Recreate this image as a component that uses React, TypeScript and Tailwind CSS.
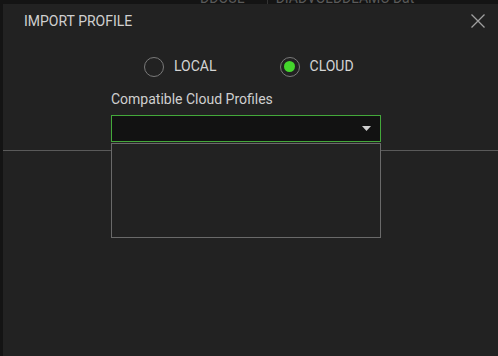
const Radio = ({ label, checked }: { label: string; checked?: boolean }) => (
  <div className="flex items-center gap-[10px]">
    <span className="flex h-[20px] w-[20px] items-center justify-center rounded-full border border-[#7a7a7a]">
      {checked && <span className="h-[11px] w-[11px] rounded-full bg-[#44d62c]" />}
    </span>
    <span className="text-[14px] text-[#d4d4d4]">{label}</span>
  </div>
)

const App = () => {
  return (
    <div
      className="flex h-[356px] w-[498px] flex-col overflow-hidden bg-[#141414]"
      style={{ fontFamily: 'Roboto, "Liberation Sans", sans-serif' }}
    >
      <div className="h-[4px] overflow-hidden">
        <div className="-mt-[10px] flex items-center text-[14px] leading-[16px] text-[#5a5a5a]">
          <span className="ml-[200px]">DDOUL</span>
          <span className="ml-[22px] h-[16px] border-l border-[#333]" />
          <span className="ml-[8px]">DIADVOLDDLAMC Dat</span>
        </div>
      </div>

      <div className="ml-[3px] flex flex-1 flex-col bg-[#222222]">
        <div className="flex items-center justify-between pl-[21px] pr-[14px] pt-[9px]">
          <span className="text-[14px] leading-[16px] text-[#d0d0d0]">IMPORT PROFILE</span>
          <svg width="14" height="14" viewBox="0 0 14 14" className="mr-[-1px]">
            <path d="M0.5 0.5l13 13M13.5 0.5l-13 13" stroke="#a0a0a0" strokeWidth="1.3" fill="none" />
          </svg>
        </div>

        <div className="mt-[27px] flex gap-[63px] pl-[141px]">
          <Radio label="LOCAL" />
          <Radio label="CLOUD" checked />
        </div>

        <div className="mt-[12px] pl-[108px] text-[14px] leading-[20px] text-[#cfcfcf]">
          Compatible Cloud Profiles
        </div>

        <div className="relative ml-[108px] mt-[6px] w-[270px]">
          <div className="flex h-[27px] items-center justify-end border border-[#43a83a] bg-[#121212] pr-[9px]">
            <svg width="9" height="5" viewBox="0 0 9 5">
              <path d="M0 0h9L4.5 5z" fill="#cfcfcf" />
            </svg>
          </div>
          <div className="absolute left-0 top-[28px] h-[95px] w-[270px] border border-[#6a6a6a] bg-[#222222]" />
        </div>

        <div className="mt-[8px] h-px bg-[#5a5a5a]" />
      </div>
    </div>
  )
}

export default App
